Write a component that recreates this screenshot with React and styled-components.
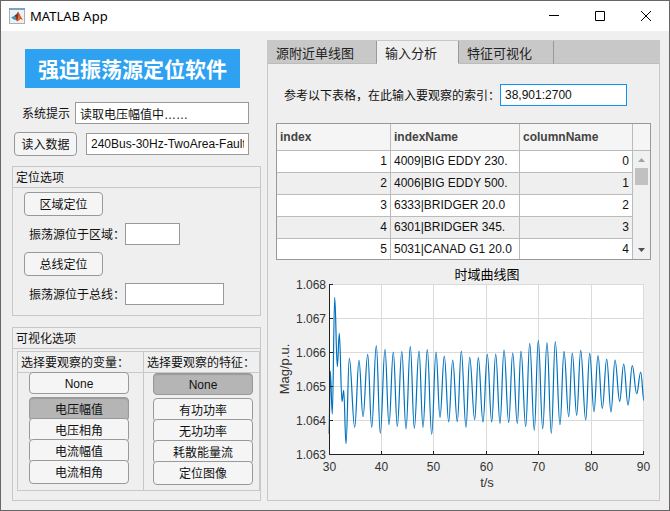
import React, { useState } from "react";
import styled, { createGlobalStyle, css } from "styled-components";

const cjk = `"Liberation Sans", "Noto Sans CJK SC", sans-serif`;

const GlobalStyle = createGlobalStyle`
  *, *::before, *::after { box-sizing: border-box; }
  body { margin: 0; background: #efefef; }
  button, input { font: inherit; color: inherit; margin: 0; }
`;

const Window = styled.div`
  display: flex;
  flex-direction: column;
  min-height: 100vh;
  border: 1px solid #6a6668;
  background: #efefef;
  color: #111;
  font: 12px/16px ${cjk};
`;

const TitleBar = styled.header`
  display: flex;
  align-items: center;
  height: 30px;
  padding-left: 8px;
  background: #fff;
`;

const AppIcon = styled.svg`
  width: 16px;
  height: 16px;
  margin-right: 5px;
`;

const AppTitle = styled.h1`
  flex: 1;
  margin: 0;
  color: #000;
  font: 400 13px/16px "Noto Sans", sans-serif;
`;

const CaptionButton = styled.button`
  display: grid;
  place-items: center;
  width: 46px;
  height: 30px;
  padding: 0;
  border: 0;
  background: none;
  svg { width: 10px; height: 10px; }
`;

const Body = styled.main`
  display: flex;
  flex: 1;
  align-items: stretch;
  gap: 6px;
  padding: 9px 9px 9px 11px;
`;

const Sidebar = styled.div`
  display: flex;
  flex-direction: column;
  flex: none;
  width: 249px;
`;

const Banner = styled.h2`
  margin: 9px 21px 14px 13px;
  background: #2ea1f0;
  color: #fff;
  font: 700 21px/39px "Noto Sans CJK SC", sans-serif;
  text-align: center;
`;

const FieldRow = styled.div`
  display: flex;
  align-items: center;
  gap: ${(p) => p.$gap || 0}px;
  margin-top: ${(p) => p.$above || 0}px;
  padding-left: ${(p) => p.$inset || 0}px;
  padding-right: ${(p) => p.$end || 0}px;
`;

const Label = styled.label`
  padding-top: 2px;
  white-space: nowrap;
`;

const TextField = styled.input`
  flex: ${(p) => (p.$width ? "none" : "1")};
  width: ${(p) => (p.$width ? `${p.$width}px` : "auto")};
  min-width: 0;
  height: 22px;
  padding: 0 4px;
  border: 1px solid ${(p) => (p.$focused ? "#0b93f6" : "#999")};
  border-radius: 0;
  background: #fff;
  outline: none;
`;

const face = css`
  padding: 1px 0 0;
  border: 1px solid #999;
  border-radius: 4px;
  line-height: 16px;
  text-align: center;
`;

const PushButton = styled.button`
  ${face}
  flex: none;
  width: ${(p) => p.$width}px;
  height: 24px;
  background: #f5f5f5;
`;

const Panel = styled.section`
  display: flex;
  flex-direction: column;
  border: 1px solid #c8c8c8;
  margin-top: ${(p) => p.$gap}px;
  flex: ${(p) => (p.$fill ? 1 : "none")};
`;

const PanelTitle = styled.h3`
  height: 21px;
  margin: 0;
  padding-left: 3px;
  border-bottom: 1px solid #c8c8c8;
  font-size: 12px;
  font-weight: 400;
  line-height: 23px;
  white-space: nowrap;
`;

const LocateBody = styled.div`
  display: grid;
  gap: 7px;
  padding: 4px 11px 10px;
`;

const Groups = styled.div`
  display: grid;
  grid-template-columns: 126px 1fr;
  margin: 2px 0 9px 4px;
  border: 1px solid #c8c8c8;
`;

const Group = styled.section`
  border-right: ${(p) => (p.$divided ? 1 : 0)}px solid #c8c8c8;
`;

const ToggleList = styled.div`
  display: flex;
  flex-direction: column;
  width: 100px;
  margin: ${(p) => (p.$divided ? "-1px 0 6px 11px" : "0 0 5px 9px")};
`;

const Toggle = styled.button`
  ${face}
  height: 24px;
  margin-top: -3px;
  background: ${(p) => (p["aria-pressed"] ? "#b5b5b5" : "#f5f5f5")};
  box-shadow: ${(p) => (p["aria-pressed"] ? "inset 0 1px 1px #999" : "none")};
  &:first-child {
    height: 22px;
    margin: 0 0 6px;
  }
`;

const TabGroup = styled.section`
  display: flex;
  flex: 1;
  flex-direction: column;
  min-width: 0;
  border: 1px solid #c8c8c8;
`;

const TabList = styled.div`
  display: flex;
  height: 23px;
  background: #c8c8c8;
  border-bottom: 1px solid #bcbcbc;
`;

const Tab = styled.button`
  width: ${(p) => p.$width}px;
  height: 23px;
  padding: 4px 0 0 8px;
  border: 0;
  border-right: 1px solid #999;
  border-bottom: 1px solid #bcbcbc;
  background: #c8c8c8;
  color: #222;
  font-size: 13px;
  line-height: 18px;
  text-align: left;
  &[aria-selected="true"] {
    background: #efefef;
    border-bottom-color: #efefef;
  }
`;

const TabPanel = styled.div`
  padding: 20px 8px 4px;
`;

const TableFrame = styled.div`
  margin-top: 17px;
  border: 1px solid #999;
`;

const Table = styled.table`
  width: 100%;
  table-layout: fixed;
  border-collapse: separate;
  border-spacing: 0;
  background: #fff;
`;

const Col = styled.col`
  width: ${(p) => p.$w};
`;

const Th = styled.th`
  height: 27px;
  padding: 0 3px;
  background: #f5f5f5;
  border-right: ${(p) => (p.$last ? 0 : 1)}px solid #bbb;
  border-bottom: 1px solid #bbb;
  color: #444;
  font-weight: 700;
  text-align: left;
`;

const Td = styled.td`
  height: 22px;
  padding: 0 3px 1px;
  border-right: 1px solid #bbb;
  border-bottom: 1px solid #bbb;
  overflow: hidden;
  text-align: ${(p) => (p.$num ? "right" : "left")};
  white-space: nowrap;
`;

const Tr = styled.tr`
  background: ${(p) => (p.$odd ? "#efefef" : "#fff")};
  &:last-child ${Td} {
    height: 20px;
    border-bottom: 0;
  }
`;

const ScrollCell = styled.td`
  padding: 0;
  background: #f1f1f1;
  vertical-align: top;
`;

const ScrollBar = styled.div`
  display: flex;
  flex-direction: column;
  align-items: center;
  justify-content: space-between;
  height: 108px;
  padding: 7px 0;
`;

const ScrollStart = styled.div`
  display: grid;
  justify-items: center;
  gap: 6px;
`;

const Arrow = styled.svg`
  display: block;
  width: 7px;
  height: 4px;
`;

const Thumb = styled.div`
  width: 13px;
  height: 17px;
  background: #c1c1c1;
`;

const Chart = styled.svg`
  display: block;
  width: 100%;
  margin-top: 4px;
  font-family: ${cjk};
  font-size: 12px;
  fill: #333;
`;

const rows = [
  [1, "4009|BIG EDDY 230.", 0],
  [2, "4006|BIG EDDY 500.", 1],
  [3, "6333|BRIDGER 20.0", 2],
  [4, "6301|BRIDGER 345.", 3],
  [5, "5031|CANAD G1 20.0", 4],
];

// Turning points of the voltage magnitude curve, in chart units.
const extrema = [
  [329, 434], [330.3, 371], [332.3, 414], [334.7, 297.3], [337.3, 366.7], [339.3, 333.3],
  [342, 401.7], [343.7, 390.3], [346, 443.7], [349.3, 358.3], [354.7, 427.3], [359, 360.3],
  [363, 416.7], [367.7, 354.3], [371.7, 427.3], [376.3, 345.7], [380.3, 433.3], [385, 349.3],
  [389, 424.7], [393.3, 352], [397.3, 426.3], [401.8, 351.7], [406, 429], [410.3, 346.3],
  [414.3, 428.3], [419, 351], [423, 427.3], [427.3, 349.7], [431.7, 434.3], [436, 352],
  [440, 417.3], [444.3, 356], [448.7, 422], [452.7, 360], [457.3, 421.7], [461.3, 351],
  [466, 427.3], [469.7, 357.3], [474.7, 419.7], [478.3, 357.7], [483, 422], [487.3, 354.3],
  [491.7, 422], [495.7, 354], [500, 423.3], [504, 350], [508.7, 422.7], [512.7, 353],
  [517.3, 423.3], [521, 351], [525.7, 426.7], [529.7, 343.3], [534.3, 430.3], [538.3, 340.3],
  [542.7, 428.7], [547, 342.7], [551.3, 433.3], [555.3, 341.7], [560, 424.7], [564, 351.3],
  [568.7, 416.7], [572.3, 353], [576.7, 415.3], [580.7, 350.3], [585.7, 420], [589.7, 353.3],
  [594, 411.7], [598, 355.7], [602.3, 408.3], [606.7, 359], [611, 412], [615, 360],
  [619.7, 401.3], [623.7, 364], [628, 405], [632.3, 365.7], [636.7, 393.7], [640.7, 372],
  [644, 400.7],
];

const curve = extrema.reduce((d, [x, y], i) => {
  if (i === 0) return `M${x} ${y}`;
  const [px, py] = extrema[i - 1];
  const k = (x - px) * 0.4;
  return `${d}C${px + k} ${py} ${x - k} ${y} ${x} ${y}`;
}, "");

const xTicks = [30, 40, 50, 60, 70, 80, 90].map((v, i) => [v, Math.floor(329 + i * 52.4) + 0.5]);
const yTicks = ["1.068", "1.067", "1.066", "1.065", "1.064", "1.063"].map((v, i) => [
  v,
  284 + i * 34 + 0.5,
]);

function TimeChart() {
  return (
    <Chart viewBox="276 264 375 228" role="img" aria-label="时域曲线图">
      <rect x="329" y="284" width="315" height="171" fill="#fff" />
      <g stroke="#dadada">
        {xTicks.map(([v, x]) => <path key={v} d={`M${x} 284V455`} />)}
        {yTicks.map(([v, y]) => <path key={v} d={`M329 ${y}H644`} />)}
      </g>
      <path d={curve} fill="none" stroke="#0072bd" strokeWidth="1.2" strokeLinejoin="round" />
      <g stroke="#222" fill="none">
        <path d="M329.5 284V454.5H644" />
        {xTicks.map(([v, x]) => <path key={v} d={`M${x} 451V455`} />)}
        {yTicks.map(([v, y]) => <path key={v} d={`M329 ${y}H333`} />)}
      </g>
      {xTicks.map(([v, x]) => <text key={v} x={x} y="471" textAnchor="middle">{v}</text>)}
      {yTicks.map(([v, y]) => <text key={v} x="326" y={y + 4.5} textAnchor="end">{v}</text>)}
      <text x="487" y="279" textAnchor="middle" fontSize="13" fill="#000">时域曲线图</text>
      <text x="487" y="487" textAnchor="middle" fontSize="13">t/s</text>
      <text transform="translate(289 369) rotate(-90)" textAnchor="middle" fontSize="13">Mag/p.u.</text>
    </Chart>
  );
}

function ToggleGroup({ title, options, initial, divided }) {
  const [active, setActive] = useState(initial);
  return (
    <Group $divided={divided}>
      <PanelTitle>{title}</PanelTitle>
      <ToggleList role="group" aria-label={title} $divided={divided}>
        {options.map((name) => (
          <Toggle key={name} type="button" aria-pressed={active === name} onClick={() => setActive(name)}>
            {name}
          </Toggle>
        ))}
      </ToggleList>
    </Group>
  );
}

function IndexTable() {
  return (
    <TableFrame>
      <Table>
        <colgroup>
          <Col $w="114px" />
          <Col $w="129px" />
          <Col $w="auto" />
          <Col $w="17px" />
        </colgroup>
        <thead>
          <tr>
            <Th scope="col">index</Th>
            <Th scope="col">indexName</Th>
            <Th scope="col">columnName</Th>
            <Th as="td" $last />
          </tr>
        </thead>
        <tbody>
          {rows.map(([index, name, column], i) => (
            <Tr key={index} $odd={i % 2 === 1}>
              <Td $num>{index}</Td>
              <Td>{name}</Td>
              <Td $num>{column}</Td>
              {i === 0 && (
                <ScrollCell rowSpan={rows.length}>
                  <ScrollBar>
                    <ScrollStart>
                      <Arrow viewBox="0 0 7 4"><path d="M0 4L3.5 0L7 4Z" fill="#a3a3a3" /></Arrow>
                      <Thumb />
                    </ScrollStart>
                    <Arrow viewBox="0 0 7 4"><path d="M0 0H7L3.5 4Z" fill="#505050" /></Arrow>
                  </ScrollBar>
                </ScrollCell>
              )}
            </Tr>
          ))}
        </tbody>
      </Table>
    </TableFrame>
  );
}

export default function App() {
  const [tab, setTab] = useState(1);
  const tabs = [["源附近单线图", 109], ["输入分析", 82], ["特征可视化", 95]];
  return (
    <>
      <GlobalStyle />
      <Window>
        <TitleBar>
          <AppIcon viewBox="0 0 16 16" aria-hidden="true">
            <rect x="0.5" y="0.5" width="15" height="15" fill="#eef1f3" stroke="#a7b0b8" />
            <path d="M0 0H16V2H0Z" fill="#7da3c4" />
            <path d="M2 9.5L5 8L8 10L5.5 12Z" fill="#3f8fc0" />
            <path d="M5 8L7.5 6L9 4L8 10Z" fill="#27507f" />
            <path d="M9 3.5C10.5 5 11.5 9 14 12L11.5 11L8.5 13.5L6 11.5L8 9Z" fill="#d9541e" />
            <path d="M9 4L9.5 8L8 12L7 11Z" fill="#8c2a1c" />
            <path d="M9.5 6L11 10.5L9 12Z" fill="#f07c2c" />
          </AppIcon>
          <AppTitle>MATLAB App</AppTitle>
          <CaptionButton type="button" aria-label="最小化">
            <svg viewBox="0 0 10 10"><path d="M0 4.5H10" stroke="#000" /></svg>
          </CaptionButton>
          <CaptionButton type="button" aria-label="最大化">
            <svg viewBox="0 0 10 10"><path d="M0.5 0.5H9.5V9.5H0.5Z" fill="none" stroke="#000" /></svg>
          </CaptionButton>
          <CaptionButton type="button" aria-label="关闭">
            <svg viewBox="0 0 10 10"><path d="M0 0L10 10M10 0L0 10" stroke="#000" /></svg>
          </CaptionButton>
        </TitleBar>
        <Body>
          <Sidebar>
            <Banner>强迫振荡源定位软件</Banner>
            <FieldRow $inset={10} $end={12} $gap={5}>
              <Label htmlFor="status">系统提示</Label>
              <TextField id="status" defaultValue="读取电压幅值中……" />
            </FieldRow>
            <FieldRow $above={8} $inset={2} $end={12} $gap={9}>
              <PushButton type="button" $width={63}>读入数据</PushButton>
              <TextField aria-label="数据文件" defaultValue="240Bus-30Hz-TwoArea-Fault" />
            </FieldRow>

            <Panel $gap={10}>
              <PanelTitle>定位选项</PanelTitle>
              <LocateBody>
                <PushButton type="button" $width={79}>区域定位</PushButton>
                <FieldRow $inset={5}>
                  <Label htmlFor="area">振荡源位于区域：</Label>
                  <TextField id="area" $width={55} />
                </FieldRow>
                <PushButton type="button" $width={79}>总线定位</PushButton>
                <FieldRow $inset={5}>
                  <Label htmlFor="bus">振荡源位于总线：</Label>
                  <TextField id="bus" $width={99} />
                </FieldRow>
              </LocateBody>
            </Panel>

            <Panel $gap={11} $fill>
              <PanelTitle>可视化选项</PanelTitle>
              <Groups>
                <ToggleGroup
                  divided
                  title="选择要观察的变量："
                  options={["None", "电压幅值", "电压相角", "电流幅值", "电流相角"]}
                  initial="电压幅值"
                />
                <ToggleGroup
                  title="选择要观察的特征："
                  options={["None", "有功功率", "无功功率", "耗散能量流", "定位图像"]}
                  initial="None"
                />
              </Groups>
            </Panel>
          </Sidebar>

          <TabGroup>
            <TabList role="tablist">
              {tabs.map(([name, width], i) => (
                <Tab key={name} type="button" role="tab" $width={width} aria-selected={tab === i} onClick={() => setTab(i)}>
                  {name}
                </Tab>
              ))}
            </TabList>
            <TabPanel role="tabpanel">
              <FieldRow $inset={8}>
                <Label htmlFor="indices">参考以下表格，在此输入要观察的索引：</Label>
                <TextField id="indices" $width={127} $focused defaultValue="38,901:2700" />
              </FieldRow>
              <IndexTable />
              <TimeChart />
            </TabPanel>
          </TabGroup>
        </Body>
      </Window>
    </>
  );
}
